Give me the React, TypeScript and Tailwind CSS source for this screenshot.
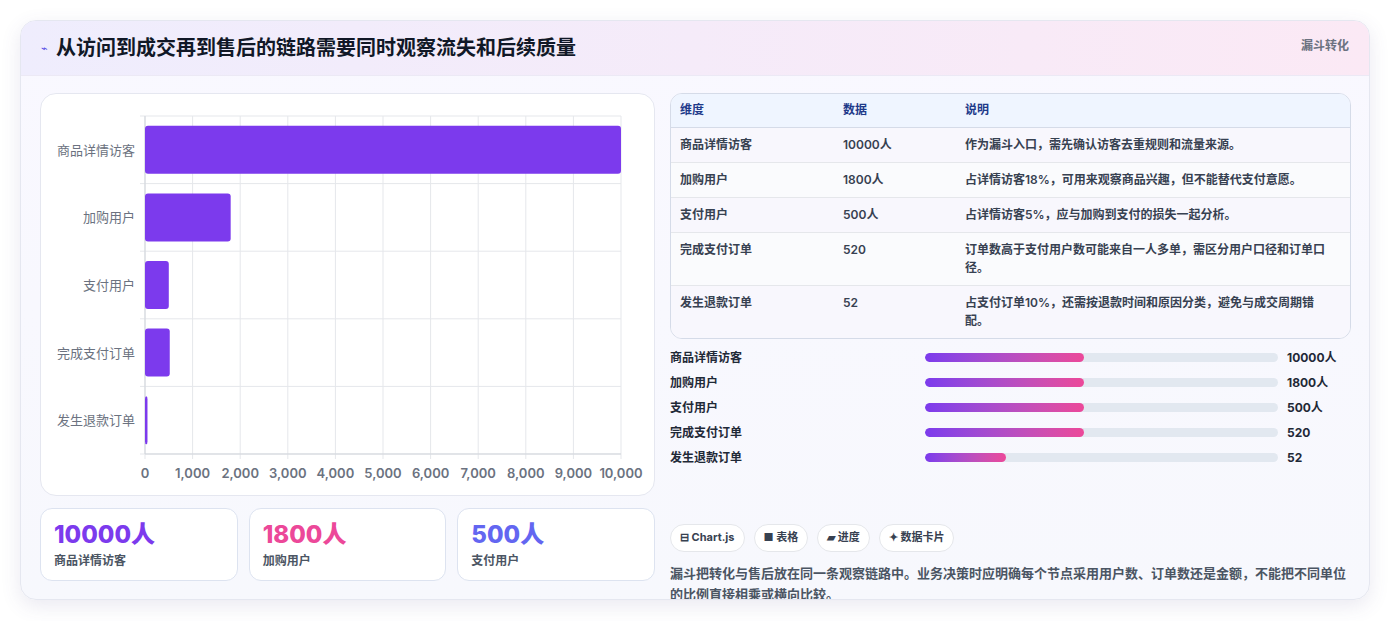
import React from 'react';

const rows = [
  { name: '商品详情访客', value: 10000, text: '10000人', note: '作为漏斗入口，需先确认访客去重规则和流量来源。', pct: 45 },
  { name: '加购用户', value: 1800, text: '1800人', note: '占详情访客18%，可用来观察商品兴趣，但不能替代支付意愿。', pct: 45 },
  { name: '支付用户', value: 500, text: '500人', note: '占详情访客5%，应与加购到支付的损失一起分析。', pct: 45 },
  { name: '完成支付订单', value: 520, text: '520', note: '订单数高于支付用户数可能来自一人多单，需区分用户口径和订单口径。', pct: 45 },
  { name: '发生退款订单', value: 52, text: '52', note: '占支付订单10%，还需按退款时间和原因分类，避免与成交周期错配。', pct: 23 },
];

function Chart() {
  const x0 = 104, x1 = 580, y0 = 22, y1 = 360;
  const bandH = (y1 - y0) / 5;
  return (
    <svg width="615" height="402" className="block">
      {Array.from({ length: 11 }).map((_, i) => {
        const x = x0 + ((x1 - x0) * i) / 10;
        return (
          <g key={i}>
            <line x1={x} y1={y0} x2={x} y2={y1 + 5} stroke="#e5e7eb" />
            <text x={x} y={384} textAnchor="middle" fontSize="13" fill="#6b7280" fontWeight="600">
              {i === 0 ? '0' : (i * 1000).toLocaleString('en-US')}
            </text>
          </g>
        );
      })}
      {Array.from({ length: 6 }).map((_, i) => (
        <line key={i} x1={x0 - 5} y1={y0 + bandH * i} x2={x1} y2={y0 + bandH * i} stroke="#e5e7eb" />
      ))}
      <line x1={x0} y1={y0} x2={x0} y2={y1} stroke="#d1d5db" />
      <line x1={x0} y1={y1} x2={x1} y2={y1} stroke="#d1d5db" />
      {rows.map((r, i) => {
        const cy = y0 + bandH * i + bandH / 2;
        const w = Math.max(((x1 - x0) * r.value) / 10000, 2);
        return (
          <g key={r.name}>
            <text x={x0 - 10} y={cy + 5} textAnchor="end" fontSize="13" fill="#6b7280">{r.name}</text>
            <rect x={x0} y={cy - 24} width={w} height={48} rx="3" fill="#7c3aed" />
          </g>
        );
      })}
    </svg>
  );
}

export default function App() {
  return (
    <div className="min-h-[621px] bg-white p-5" style={{ fontFamily: 'Inter, "Noto Sans CJK SC", sans-serif' }}>
      <div className="rounded-2xl border border-[#e5e7f0] bg-gradient-to-b from-[#f9f8ff] to-[#f7f8fd] shadow-[0_6px_20px_rgba(80,70,140,0.12)] overflow-hidden h-[580px]">
        <div className="flex items-center justify-between h-[55px] px-5 bg-gradient-to-r from-[#efedfd] to-[#fbe9f5] border-b border-[#ece9f5]">
          <div className="flex items-center gap-2">
            <span className="text-[11px] text-[#4f46e5]">⌁</span>
            <h1 className="text-[20px] font-bold text-[#111827]">从访问到成交再到售后的链路需要同时观察流失和后续质量</h1>
          </div>
          <span className="text-[12px] font-bold text-[#6b7280] self-start mt-4">漏斗转化</span>
        </div>
        <div className="flex gap-[15px] pl-[19px] pr-[18px] pt-[17px]">
          <div className="w-[615px] flex flex-col gap-3">
            <div className="h-[403px] rounded-2xl bg-white border border-[#e5e7f0]">
              <Chart />
            </div>
            <div className="grid grid-cols-3 gap-[11px]">
              {[
                ['10000人', 'text-[#7c3aed]', '商品详情访客'],
                ['1800人', 'text-[#ec4899]', '加购用户'],
                ['500人', 'text-[#6366f1]', '支付用户'],
              ].map(([v, c, l]) => (
                <div key={l} className="h-[73px] rounded-xl bg-white border border-[#dde3f0] px-[13px] pt-[11px]">
                  <div className={`text-[24px] font-extrabold leading-[30px] ${c}`}>{v}</div>
                  <div className="text-[12px] font-semibold text-[#4b5563] mt-[2px]">{l}</div>
                </div>
              ))}
            </div>
          </div>
          <div className="flex-1 flex flex-col">
            <div className="rounded-xl border border-[#d5dbe8] overflow-hidden bg-[#f9f9fd]">
              <table className="w-full text-[12px] font-semibold text-[#374151]">
                <thead>
                  <tr className="bg-[#eff5ff] text-[#1e3a8a] h-[33px] border-b border-[#d5dbe8]">
                    <th className="text-left font-semibold pl-[9px] w-[172px]">维度</th>
                    <th className="text-left font-semibold w-[122px]">数据</th>
                    <th className="text-left font-semibold">说明</th>
                  </tr>
                </thead>
                <tbody>
                  {rows.map((r, i) => (
                    <tr key={r.name} className={`${i < 4 ? 'border-b border-[#e5e7eb]' : ''} ${i % 2 ? 'bg-[#fafbfd]' : 'bg-[#f8f7fd]'}`}>
                      <td className="pl-[9px] py-[8px] leading-[18px] align-top">{r.name}</td>
                      <td className="py-[8px] leading-[18px] align-top">{r.text}</td>
                      <td className="py-[8px] pr-4 leading-[18px] align-top">{r.note}</td>
                    </tr>
                  ))}
                </tbody>
              </table>
            </div>
            <div className="flex flex-col gap-[7px] mt-[10px]">
              {rows.map(r => (
                <div key={r.name} className="flex items-center h-[18px] text-[12px] font-bold text-[#1f2937]">
                  <span className="w-[255px]">{r.name}</span>
                  <div className="w-[353px] h-[9px] rounded-full bg-[#e2e8f0] overflow-hidden">
                    <div className="h-full rounded-full bg-gradient-to-r from-[#7c3aed] to-[#ec4899]" style={{ width: `${r.pct}%` }} />
                  </div>
                  <span className="ml-[9px]">{r.text}</span>
                </div>
              ))}
            </div>
            <div className="flex gap-[9px] mt-[57px]">
              {['⊟ Chart.js', '■ 表格', '▰ 进度', '✦ 数据卡片'].map(t => (
                <span key={t} className="h-[28px] px-[9px] flex items-center rounded-full border border-[#e5e7eb] bg-white text-[11px] font-bold text-[#374151]">{t}</span>
              ))}
            </div>
            <p className="mt-[11px] text-[13px] leading-[21px] font-semibold text-[#4b5563]">
              漏斗把转化与售后放在同一条观察链路中。业务决策时应明确每个节点采用用户数、订单数还是金额，不能把不同单位的比例直接相乘或横向比较。
            </p>
          </div>
        </div>
      </div>
    </div>
  );
}
